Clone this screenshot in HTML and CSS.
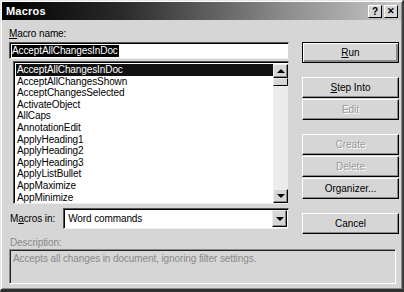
FILE: index.html
```html
<!DOCTYPE html>
<html lang="en">
<head>
    <meta charset="UTF-8">
    <title>Macros</title>
    <link rel="stylesheet" href="styles.css">
</head>
<body>

<div class="dialog">
    <div class="titlebar">
        <span class="title">Macros</span>
        <div class="caption-btns">
            <span class="cap-btn">?</span>
            <span class="cap-btn cap-close">&#x2715;</span>
        </div>
    </div>

    <div class="content">
        <div class="main">
            <div class="left">
                <div class="label"><u>M</u>acro name:</div>
                <div class="textbox"><span class="selected-text">AcceptAllChangesInDoc</span></div>

                <div class="listbox">
                    <ul class="items">
                        <li class="item active">AcceptAllChangesInDoc</li>
                        <li class="item">AcceptAllChangesShown</li>
                        <li class="item">AcceptChangesSelected</li>
                        <li class="item">ActivateObject</li>
                        <li class="item">AllCaps</li>
                        <li class="item">AnnotationEdit</li>
                        <li class="item">ApplyHeading1</li>
                        <li class="item">ApplyHeading2</li>
                        <li class="item">ApplyHeading3</li>
                        <li class="item">ApplyListBullet</li>
                        <li class="item">AppMaximize</li>
                        <li class="item">AppMinimize</li>
                    </ul>
                    <div class="vscroll">
                        <span class="arrow-btn"><span class="tri-up"></span></span>
                        <span class="thumb"></span>
                        <span class="track"></span>
                        <span class="arrow-btn"><span class="tri-down"></span></span>
                    </div>
                </div>

                <div class="macros-in">
                    <span class="label">M<u>a</u>cros in:</span>
                    <div class="combo">
                        <span class="combo-text">Word commands</span>
                        <span class="arrow-btn"><span class="tri-down"></span></span>
                    </div>
                </div>
            </div>

            <div class="buttons">
                <button class="button default"><u>R</u>un</button>
                <div class="btn-gap-lg"></div>
                <button class="button"><u>S</u>tep Into</button>
                <button class="button disabled">Edit</button>
                <div class="btn-gap-lg"></div>
                <button class="button disabled">Create</button>
                <button class="button disabled">Delete</button>
                <button class="button">Organizer...</button>
                <div class="btn-gap-lg"></div>
                <button class="button">Cancel</button>
            </div>
        </div>

        <div class="desc-label">Description:</div>
        <div class="desc-box">Accepts all changes in document, ignoring filter settings.</div>
    </div>
</div>

</body>
</html>
```

FILE: styles.css
```css
body {
    margin: 0;
    background: #d6d6d6;
    font-family: "Liberation Sans", Arial, sans-serif;
    font-size: 10px;
    letter-spacing: -0.1px;
    color: #000;
}

.dialog {
    width: 404px;
    height: 292px;
    box-sizing: border-box;
    background: #d6d6d6;
    border-top: 1px solid #e6e6e6;
    border-left: 1px solid #e6e6e6;
    border-right: 2px solid #404040;
    border-bottom: 3px solid #303030;
    box-shadow: inset 1px 1px 0 #fff, inset -1px -1px 0 #8a8a8a;
    padding: 1px;
}

/* title bar */
.titlebar {
    height: 18px;
    display: flex;
    align-items: center;
    justify-content: space-between;
    padding: 0 3px 0 4px;
    background: linear-gradient(to right, #000 0%, #2a2a2a 30%, #8a8a8a 70%, #c8c8c8 100%);
}

.title {
    color: #fff;
    font-weight: bold;
    font-size: 11px;
    letter-spacing: 0.2px;
}

.caption-btns {
    display: flex;
    gap: 2px;
}

.cap-btn {
    width: 14px;
    height: 13px;
    box-sizing: border-box;
    background: #d6d6d6;
    border-top: 1px solid #fff;
    border-left: 1px solid #fff;
    border-right: 1px solid #000;
    border-bottom: 1px solid #000;
    font-weight: bold;
    font-size: 10px;
    line-height: 11px;
    text-align: center;
}

.cap-close {
    font-size: 9px;
}

/* body */
.content {
    padding: 0 2px 0 7px;
}

.main {
    display: flex;
    justify-content: space-between;
}

.left {
    width: 280px;
}

.label {
    padding-top: 9px;
    height: 13px;
    line-height: 10px;
}

.textbox {
    height: 17px;
    box-sizing: border-box;
    background: #fff;
    border-top: 1px solid #555;
    border-left: 1px solid #555;
    border-right: 1px solid #d6d6d6;
    border-bottom: 1px solid #eee;
    box-shadow: inset 1px 1px 0 #000;
    padding: 2px 0 0 2px;
    line-height: 12px;
}

.selected-text {
    background: #000;
    color: #fff;
    display: inline-block;
    padding: 0 1px 0 0;
}

/* list */
.listbox {
    margin: 2px 0 0 4px;
    height: 143px;
    box-sizing: border-box;
    display: flex;
    background: #fff;
    border-top: 1px solid #555;
    border-left: 1px solid #555;
    border-right: 1px solid #d6d6d6;
    border-bottom: 1px solid #eee;
    box-shadow: inset 1px 1px 0 #000;
    padding: 2px 0 0 2px;
}

.items {
    list-style: none;
    margin: 0;
    padding: 0;
    flex: 1;
}

.item {
    height: 11.6px;
    line-height: 11.6px;
    padding-left: 1px;
    white-space: nowrap;
}

.item.active {
    background: #111;
    color: #fff;
}

.vscroll {
    width: 15px;
    display: flex;
    flex-direction: column;
    background: #ececec;
}

.arrow-btn {
    width: 15px;
    height: 14px;
    box-sizing: border-box;
    background: #d6d6d6;
    border-top: 1px solid #eee;
    border-left: 1px solid #eee;
    border-right: 1px solid #000;
    border-bottom: 1px solid #000;
    box-shadow: inset -1px -1px 0 #888;
    display: flex;
    align-items: center;
    justify-content: center;
    flex: none;
}

.thumb {
    height: 8px;
    flex: none;
    box-sizing: border-box;
    background: #d6d6d6;
    border-top: 1px solid #eee;
    border-left: 1px solid #eee;
    border-right: 1px solid #000;
    border-bottom: 1px solid #000;
}

.track {
    flex: 1;
}

.tri-up {
    width: 0;
    height: 0;
    border-left: 4px solid transparent;
    border-right: 4px solid transparent;
    border-bottom: 4px solid #000;
}

.tri-down {
    width: 0;
    height: 0;
    border-left: 4px solid transparent;
    border-right: 4px solid transparent;
    border-top: 4px solid #000;
}

/* macros in */
.macros-in {
    display: flex;
    align-items: center;
    margin-top: 4px;
    gap: 8px;
}

.macros-in .label {
    padding: 0 0 0 1px;
    height: auto;
}

.combo {
    flex: 1;
    height: 21px;
    box-sizing: border-box;
    display: flex;
    align-items: center;
    background: #fff;
    border-top: 1px solid #555;
    border-left: 1px solid #555;
    border-right: 1px solid #d6d6d6;
    border-bottom: 1px solid #eee;
    box-shadow: inset 1px 1px 0 #000;
    padding: 1px 1px 1px 4px;
}

.combo-text {
    flex: 1;
}

.combo .arrow-btn {
    height: 17px;
}

/* buttons */
.buttons {
    width: 97px;
    padding-top: 22px;
    display: flex;
    flex-direction: column;
    gap: 1px;
}

.button {
    height: 21px;
    box-sizing: border-box;
    font-family: inherit;
    font-size: 10px;
    color: #000;
    background: #d6d6d6;
    border-top: 1px solid #fff;
    border-left: 1px solid #fff;
    border-right: 1px solid #000;
    border-bottom: 1px solid #000;
    box-shadow: inset -1px -1px 0 #8a8a8a;
    padding: 0;
    margin: 0;
}

.button.default {
    border: 1px solid #000;
    box-shadow: inset 1px 1px 0 #fff, inset -2px -2px 0 #8a8a8a, inset -1px -1px 0 #000;
}

.button.disabled {
    color: #9a9a9a;
    text-shadow: 1px 1px 0 #fff;
}

.btn-gap-lg {
    height: 12px;
}

/* description */
.desc-label {
    color: #8a8a8a;
    margin-top: 3px;
    line-height: 12px;
    padding-left: 1px;
}

.desc-box {
    margin-top: 0;
    height: 35px;
    box-sizing: border-box;
    border-top: 1px solid #8a8a8a;
    border-left: 1px solid #8a8a8a;
    border-right: 1px solid #fff;
    border-bottom: 1px solid #fff;
    box-shadow: inset 1px 1px 0 #222;
    color: #8a8a8a;
    padding: 3px 0 0 3px;
    margin-right: 3px;
}
```
